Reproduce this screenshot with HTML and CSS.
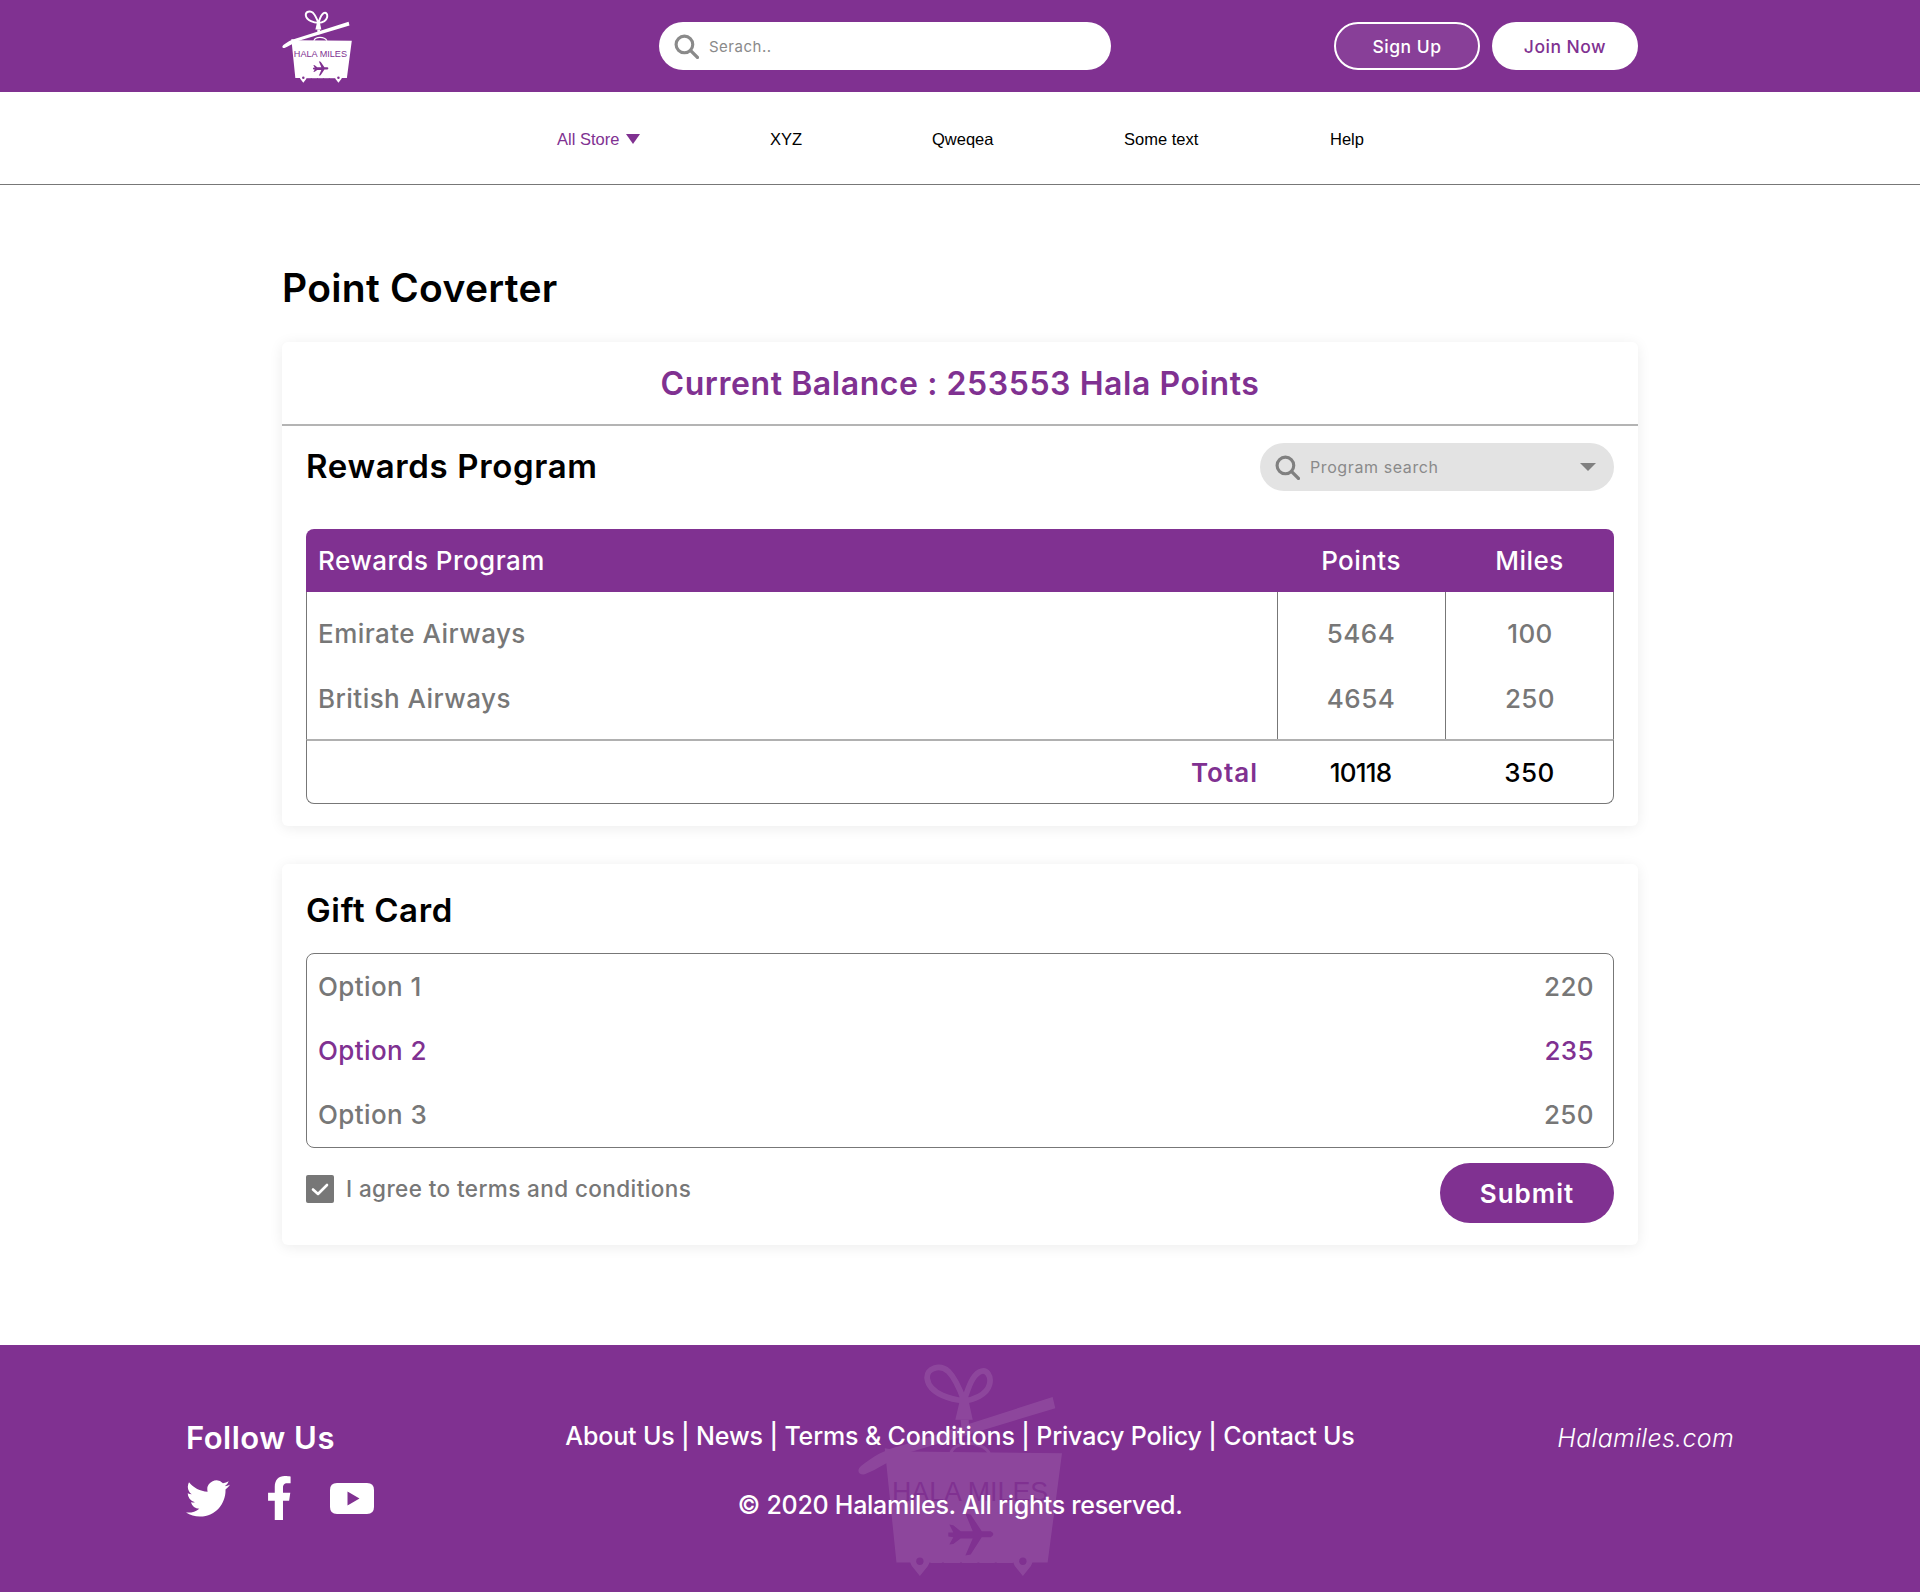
FILE: index.html
```html
<!DOCTYPE html>
<html lang="en">

<head>
    <meta charset="UTF-8">
    <meta name="viewport" content="width=device-width, initial-scale=1.0">
    <title>Point Coverter</title>
    <link rel="stylesheet" href="styles.css">
</head>

<body>
    <svg class="sprites" width="0" height="0" aria-hidden="true">
        <defs>
            <g id="logo-art">
                <path class="logo-line" d="M372 178 C340 175 268 160 262 112 C258 80 300 68 325 90 C345 110 360 145 372 178 C385 140 395 105 418 92 C440 80 455 105 448 130 C440 160 400 175 372 178" />
                <path class="logo-thin" d="M332 335 C345 295 425 295 448 335" />
                <polygon class="logo-light" points="346,235 398,235 385,175 360,175" />
                <polygon class="logo-light" points="362,235 386,235 388,275 366,280" />
                <path class="logo-light" d="M637 167 L645 200 L200 335 C160 350 110 385 75 398 C55 400 50 385 65 372 C100 345 130 325 190 310 Z" />
                <polygon class="logo-light" points="135,320 190,330 665,335 622,662 170,662" />
                <path class="logo-ink" d="M325 572 L340 572 L328 548 L340 550 L362 568 L398 568 L376 515 L392 518 L425 568 L452 568 Q468 576 452 586 L425 586 L392 638 L376 641 L398 590 L362 590 L340 606 L328 608 L340 586 L325 584 Z" />
                <path class="logo-light" d="M240 702 L216 672 A29 29 0 1 1 264 672 Z" />
                <path class="logo-light" d="M548 702 L524 672 A29 29 0 1 1 572 672 Z" />
                <rect class="logo-light" x="272" y="654" width="34" height="9" />
                <rect class="logo-light" x="312" y="654" width="48" height="9" />
                <rect class="logo-light" x="366" y="654" width="46" height="9" />
                <rect class="logo-light" x="418" y="654" width="46" height="9" />
                <rect class="logo-light" x="470" y="654" width="48" height="9" />
                <circle class="logo-ink" cx="240" cy="658" r="11" />
                <circle class="logo-ink" cx="548" cy="658" r="11" />
            </g>
        </defs>
        <symbol id="search" viewBox="0 0 24 24">
            <circle cx="10" cy="10" r="8" fill="none" stroke="currentColor" stroke-width="3" />
            <path d="M16 16 L22.500 22.500" fill="none" stroke="currentColor" stroke-width="3.200" stroke-linecap="round" />
        </symbol>
    </svg>

    <header class="topbar">
        <div class="wrap topbar-inner">
            <svg class="logo-small" viewBox="55 65 610 640" role="img" aria-label="Hala Miles">
                <use href="#logo-art" />
                <text class="logo-text" x="390" y="478" text-anchor="middle">HALA MILES</text>
            </svg>
            <div class="top-search">
                <svg class="top-search-icon"><use href="#search" /></svg>
                <span>Serach..</span>
            </div>
            <div class="top-buttons">
                <a class="btn-outline">Sign Up</a>
                <a class="btn-white">Join Now</a>
            </div>
        </div>
    </header>

    <nav class="menu">
        <a class="menu-item menu-store">All Store <span class="menu-arrow"></span></a>
        <a class="menu-item menu-xyz">XYZ</a>
        <a class="menu-item menu-qw">Qweqea</a>
        <a class="menu-item menu-some">Some text</a>
        <a class="menu-item">Help</a>
    </nav>

    <main class="wrap content">
        <h1 class="page-title">Point Coverter</h1>

        <section class="card">
            <div class="balance">Current Balance : 253553 Hala Points</div>
            <div class="card-body rewards-body">
                <div class="rewards-head">
                    <h2 class="card-title">Rewards Program</h2>
                    <div class="program-search">
                        <svg class="program-icon"><use href="#search" /></svg>
                        <span>Program search</span>
                        <span class="program-arrow"></span>
                    </div>
                </div>
                <table class="rewards-table">
                    <thead>
                        <tr>
                            <th class="col-name">Rewards Program</th>
                            <th class="col-num">Points</th>
                            <th class="col-num">Miles</th>
                        </tr>
                    </thead>
                    <tbody>
                        <tr class="row-first">
                            <td>Emirate Airways</td>
                            <td class="num">5464</td>
                            <td class="num">100</td>
                        </tr>
                        <tr class="row-last">
                            <td>British Airways</td>
                            <td class="num">4654</td>
                            <td class="num">250</td>
                        </tr>
                        <tr class="row-total">
                            <td class="total-label">Total</td>
                            <td class="num total-points">10118</td>
                            <td class="num">350</td>
                        </tr>
                    </tbody>
                </table>
            </div>
        </section>

        <section class="card">
            <div class="card-body gift-body">
                <h2 class="card-title gift-title">Gift Card</h2>
                <div class="options">
                    <div class="option"><span>Option 1</span><span>220</span></div>
                    <div class="option option-active"><span>Option 2</span><span>235</span></div>
                    <div class="option"><span>Option 3</span><span>250</span></div>
                </div>
                <div class="agree-row">
                    <label class="agree">
                        <span class="checkbox">
                            <svg viewBox="0 0 28 28" width="28" height="28"><path d="M7 14.500 L12 19 L21 10" fill="none" stroke="#fff" stroke-width="2.600" stroke-linecap="round" stroke-linejoin="round" /></svg>
                        </span>
                        <span class="agree-text">I agree to terms and conditions</span>
                    </label>
                    <button class="submit">Submit</button>
                </div>
            </div>
        </section>
    </main>

    <footer class="footer">
        <svg class="logo-watermark" viewBox="55 65 610 640" aria-hidden="true">
            <use href="#logo-art" />
            <text class="logo-text" x="390" y="478" text-anchor="middle">HALA MILES</text>
        </svg>
        <div class="footer-inner">
            <div class="follow">
                <div class="follow-title">Follow Us</div>
                <div class="social">
                    <svg class="icon-twitter" viewBox="0 2 24 20" preserveAspectRatio="none"><path fill="#fff" d="M23.953 4.57a10 10 0 01-2.825.775 4.958 4.958 0 002.163-2.723c-.951.555-2.005.959-3.127 1.184a4.92 4.92 0 00-8.384 4.482C7.69 8.095 4.067 6.13 1.64 3.162a4.822 4.822 0 00-.666 2.475c0 1.71.87 3.213 2.188 4.096a4.904 4.904 0 01-2.228-.616v.06a4.923 4.923 0 003.946 4.827 4.996 4.996 0 01-2.212.085 4.936 4.936 0 004.604 3.417 9.867 9.867 0 01-6.102 2.105c-.39 0-.779-.023-1.17-.067a13.995 13.995 0 007.557 2.209c9.053 0 13.998-7.496 13.998-13.985 0-.21 0-.42-.015-.63A9.935 9.935 0 0024 4.59z" /></svg>
                    <svg class="icon-facebook" viewBox="22 0 280 512" preserveAspectRatio="none"><path fill="#fff" d="M279.14 288l14.22-92.66h-88.91v-60.13c0-25.35 12.42-50.06 52.24-50.06h40.42V6.26S260.43 0 225.36 0c-73.22 0-121.08 44.38-121.08 124.72v70.62H22.89V288h81.39v224h100.17V288z" /></svg>
                    <svg class="icon-youtube" viewBox="0 0 44 31"><path fill="#fff" fill-rule="evenodd" d="M7 0 H37 Q44 0 44 7 V24 Q44 31 37 31 H7 Q0 31 0 24 V7 Q0 0 7 0 Z M17.500 8.500 V22.500 L29.500 15.500 Z" /></svg>
                </div>
            </div>
            <div class="footer-middle">
                <div class="footer-links">About Us | News | Terms &amp; Conditions | Privacy Policy | Contact Us</div>
                <div class="copyright">© 2020 Halamiles. All rights reserved.</div>
            </div>
            <div class="site-name">Halamiles.com</div>
        </div>
    </footer>
</body>

</html>
```

FILE: styles.css
```css
* {
    box-sizing: border-box;
}

body {
    margin: 0;
    font-family: Inter, "Open Sans", sans-serif;
    color: #000;
    background-color: #fff;
}

.sprites {
    display: block;
    height: 0;
}

.wrap {
    width: 1356px;
    margin: 0 auto;
}

/* logo parts */
.logo-line {
    fill: none;
    stroke: currentColor;
    stroke-width: 17;
}

.logo-thin {
    fill: none;
    stroke: currentColor;
    stroke-width: 9;
}

.logo-light {
    fill: currentColor;
}

.logo-ink {
    fill: var(--logo-ink);
}

.logo-text {
    fill: var(--logo-ink);
    font-family: "Liberation Sans", sans-serif;
    font-size: 80px;
}

/* top bar */
.topbar {
    height: 92px;
    background-color: #803191;
}

.topbar-inner {
    display: flex;
    align-items: center;
    height: 100%;
}

.logo-small {
    width: 70px;
    height: 73px;
    color: #fff;
    --logo-ink: #803191;
}

.top-search {
    display: flex;
    align-items: center;
    gap: 10px;
    width: 452px;
    height: 48px;
    margin-left: 307px;
    padding-left: 15px;
    border-radius: 24px;
    background-color: #fff;
    color: #8a8a8a;
    font-size: 15px;
    letter-spacing: 0.5px;
}

.top-search-icon {
    width: 25px;
    height: 25px;
    color: #8a8a8a;
}

.top-buttons {
    display: flex;
    gap: 12px;
    margin-left: auto;
}

.btn-outline,
.btn-white {
    display: flex;
    align-items: center;
    justify-content: center;
    width: 146px;
    height: 48px;
    border-radius: 24px;
    font-size: 17.5px;
    font-weight: 500;
    letter-spacing: 0.5px;
}

.btn-outline {
    border: 2px solid #fff;
    background-color: #883f98;
    color: #fff;
}

.btn-white {
    background-color: #fff;
    color: #803191;
}

/* menu */
.menu {
    display: flex;
    align-items: center;
    height: 93px;
    padding-top: 2px;
    padding-left: 557px;
    border-bottom: 1px solid #777;
    font-family: "Liberation Sans", Arial, sans-serif;
    font-size: 16.5px;
}

.menu-item {
    color: #000;
    white-space: nowrap;
}

.menu-store {
    display: flex;
    align-items: center;
    gap: 7px;
    width: 213px;
    color: #803191;
}

.menu-xyz {
    width: 162px;
}

.menu-qw {
    width: 192px;
}

.menu-some {
    width: 206px;
}

.menu-arrow {
    width: 0;
    height: 0;
    border-left: 7px solid transparent;
    border-right: 7px solid transparent;
    border-top: 10px solid #803191;
}

/* main */
.content {
    padding-top: 78px;
    padding-bottom: 100px;
}

.page-title {
    margin: 0 0 29px;
    height: 50px;
    font-size: 39px;
    line-height: 49px;
    font-weight: 600;
    letter-spacing: 0.3px;
}

.card {
    margin-bottom: 38px;
    border-radius: 6px;
    background-color: #fff;
    box-shadow: 0 2px 14px rgba(0, 0, 0, 0.08);
}

.card:last-child {
    margin-bottom: 0;
}

.balance {
    height: 84px;
    border-bottom: 2px solid #b4b4b4;
    color: #803191;
    font-size: 32px;
    line-height: 84px;
    font-weight: 600;
    letter-spacing: 0.57px;
    text-align: center;
}

.card-body {
    padding: 0 24px;
}

.rewards-body {
    padding-bottom: 22px;
}

.rewards-head {
    display: flex;
    justify-content: space-between;
    padding-top: 17px;
    height: 103px;
}

.card-title {
    margin: 0;
    font-size: 33px;
    line-height: 46px;
    font-weight: 600;
    letter-spacing: 0.65px;
}

.program-search {
    display: flex;
    align-items: center;
    gap: 10px;
    width: 354px;
    height: 48px;
    padding: 0 18px 0 15px;
    border-radius: 24px;
    background-color: #e3e3e3;
    color: #8a8a8a;
    font-size: 16px;
    letter-spacing: 0.6px;
}

.program-icon {
    width: 25px;
    height: 25px;
    color: #808080;
}

.program-arrow {
    width: 0;
    height: 0;
    margin-left: auto;
    border-left: 8px solid transparent;
    border-right: 8px solid transparent;
    border-top: 8px solid #808080;
}

/* table */
.rewards-table {
    width: 1308px;
    table-layout: fixed;
    border-collapse: separate;
    border-spacing: 0;
    font-size: 26px;
    font-weight: 500;
    letter-spacing: 0.45px;
}

.rewards-table th {
    height: 63px;
    background-color: #803191;
    color: #fff;
    font-weight: 500;
}

.col-name {
    width: 971px;
    padding-left: 12px;
    text-align: left;
    border-top-left-radius: 8px;
}

.col-num {
    width: 168px;
}

.col-num:last-child {
    width: 169px;
    border-top-right-radius: 8px;
}

.rewards-table td {
    height: 64px;
    padding-left: 11px;
    border-left: 1px solid #777;
    color: #777;
}

.rewards-table td:last-child {
    border-right: 1px solid #777;
}

.rewards-table td.num {
    padding-left: 0;
    text-align: center;
}

.rewards-table td.num:last-child {
    padding-left: 2px;
}

.row-first td {
    height: 74px;
    padding-top: 10px;
}

.row-last td {
    height: 73px;
    padding-bottom: 9px;
}

.rewards-table .row-total td {
    height: 65px;
    border-top: 2px solid #b0b0b0;
    border-left: 0;
    border-bottom: 1px solid #777;
    color: #000;
}

.rewards-table .row-total td:first-child {
    border-left: 1px solid #777;
    border-bottom-left-radius: 8px;
}

.rewards-table .row-total td:last-child {
    border-bottom-right-radius: 8px;
}

.rewards-table .row-total .total-label {
    padding-right: 19px;
    color: #803191;
    font-weight: 600;
    letter-spacing: 1px;
    text-align: right;
}

.rewards-table .row-total .total-points {
    letter-spacing: -0.8px;
}

/* gift card */
.gift-body {
    padding-bottom: 22px;
}

.gift-title {
    padding-top: 23px;
    height: 89px;
}

.options {
    border: 1px solid #777;
    border-radius: 8px;
    padding-bottom: 1px;
}

.option {
    display: flex;
    align-items: center;
    justify-content: space-between;
    height: 64px;
    padding: 0 19px 0 11px;
    color: #777;
    font-size: 26px;
    font-weight: 500;
    letter-spacing: 0.4px;
}

.option-active {
    color: #803191;
}

.agree-row {
    display: flex;
    align-items: flex-start;
    justify-content: space-between;
    padding-top: 15px;
}

.agree {
    display: flex;
    align-items: center;
    gap: 12px;
    padding-top: 12px;
    color: #777;
    font-size: 22.5px;
    font-weight: 500;
    letter-spacing: 0.4px;
}

.agree-text {
    margin-top: -2px;
}

.checkbox {
    display: block;
    width: 28px;
    height: 28px;
    border-radius: 2px;
    background-color: #777;
}

.checkbox svg {
    display: block;
}

.submit {
    width: 174px;
    height: 60px;
    padding: 0;
    border: none;
    border-radius: 30px;
    background-color: #803191;
    color: #fff;
    font-family: inherit;
    font-size: 26px;
    font-weight: 600;
    letter-spacing: 1px;
}

/* footer */
.footer {
    position: relative;
    height: 247px;
    overflow: hidden;
    background-color: #803191;
    color: #fff;
}

.logo-watermark {
    position: absolute;
    left: 858px;
    top: 18px;
    width: 204px;
    height: 214px;
    opacity: 0.1;
    color: #fff;
    --logo-ink: #803191;
}

.footer-inner {
    position: relative;
    display: flex;
    justify-content: space-between;
    width: 1548px;
    margin: 0 auto;
    padding-top: 73px;
}

.follow {
    width: 300px;
}

.follow-title {
    height: 40px;
    font-size: 31px;
    line-height: 40px;
    font-weight: 600;
    letter-spacing: 0.5px;
}

.social {
    display: flex;
    align-items: center;
    height: 44px;
    margin-top: 18px;
}

.icon-twitter {
    width: 44px;
    height: 37px;
}

.icon-facebook {
    width: 23px;
    height: 44px;
    margin-left: 38px;
}

.icon-youtube {
    width: 44px;
    height: 31px;
    margin-left: 39px;
}

.footer-middle {
    text-align: center;
    font-size: 25px;
    font-weight: 500;
}

.footer-links {
    height: 36px;
    line-height: 36px;
    letter-spacing: -0.15px;
    white-space: nowrap;
}

.copyright {
    margin-top: 33px;
    line-height: 36px;
    letter-spacing: -0.27px;
}

.site-name {
    width: 300px;
    padding-top: 2px;
    font-size: 25px;
    line-height: 36px;
    font-style: italic;
    font-weight: 300;
    letter-spacing: 0.3px;
    text-align: right;
}
```
